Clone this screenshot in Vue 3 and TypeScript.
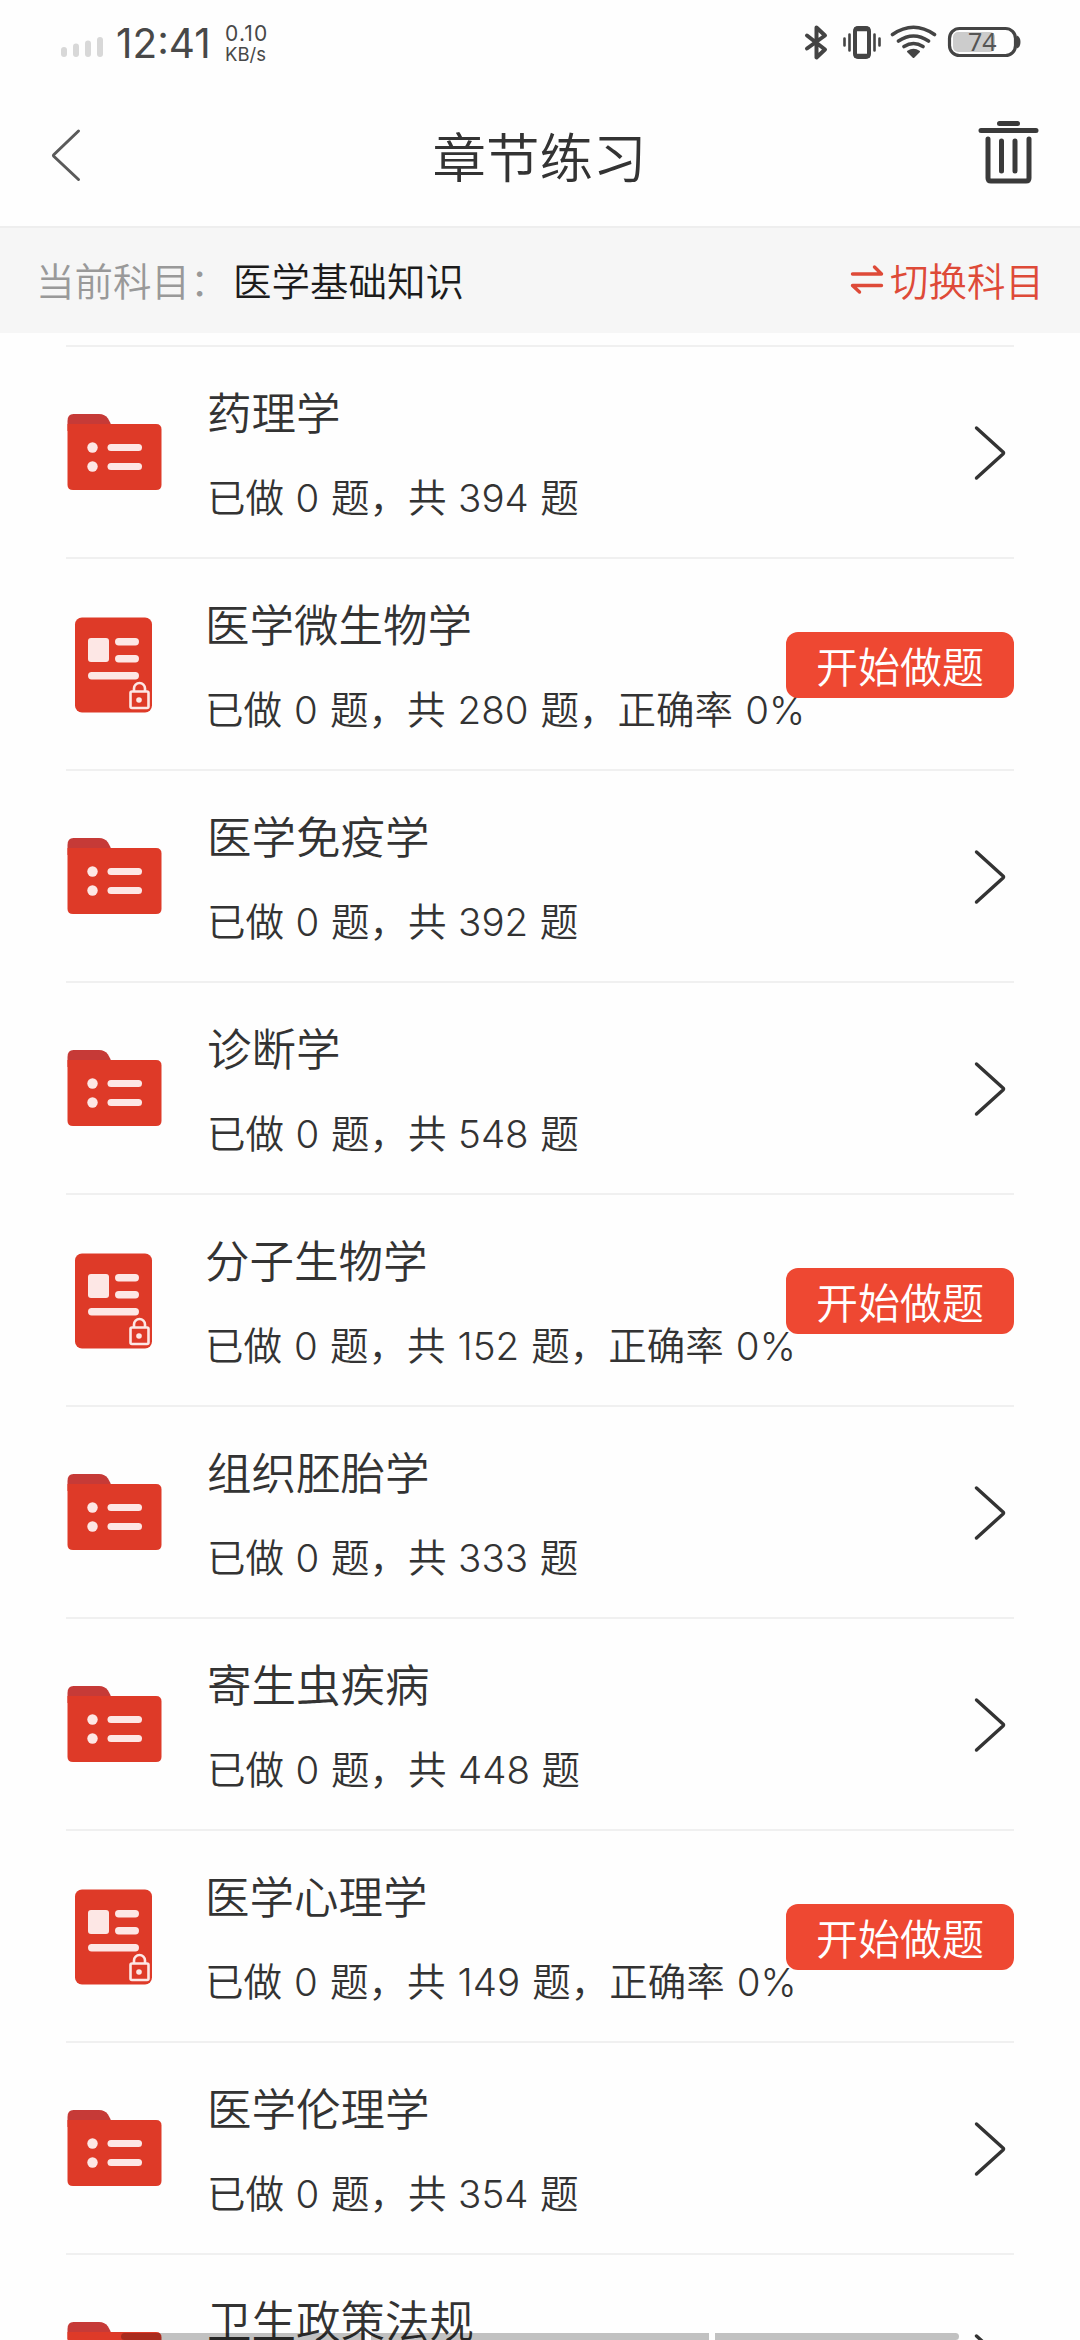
<script setup lang="ts">
interface Chapter {
  name: string
  total?: number
  locked?: boolean
}

const chapters: Chapter[] = [
  { name: '药理学', total: 394 },
  { name: '医学微生物学', total: 280, locked: true },
  { name: '医学免疫学', total: 392 },
  { name: '诊断学', total: 548 },
  { name: '分子生物学', total: 152, locked: true },
  { name: '组织胚胎学', total: 333 },
  { name: '寄生虫疾病', total: 448 },
  { name: '医学心理学', total: 149, locked: true },
  { name: '医学伦理学', total: 354 },
  { name: '卫生政策法规' },
]
</script>

<template>
  <div class="screen">
    <div class="status">
      <svg class="signal" width="44" height="22" viewBox="0 0 44 22" fill="#d8d8d8">
        <rect x="0" y="11" width="6" height="10" rx="3" />
        <rect x="12" y="7.5" width="6" height="13.5" rx="3" />
        <rect x="24" y="4.5" width="6" height="16.5" rx="3" />
        <rect x="36" y="1" width="6" height="20" rx="3" />
      </svg>
      <span class="clock">12:41</span>
      <span class="speed"><span class="rate">0.10</span><span>KB/s</span></span>
      <svg class="indicators" width="220" height="40" viewBox="802 22 220 40" fill="none" stroke="#444" stroke-linecap="round" stroke-linejoin="round">
        <path d="M807 35.500L825 49.500L816.500 57.500V27.500L825 35.500L807 48.500" stroke-width="4" />
        <rect x="855" y="28" width="14" height="29" rx="3" stroke-width="4" />
        <path d="M856 29h12M856 56h12" stroke-width="4.500" />
        <path d="M844.500 38.500v7M849.500 34.500v16M874.500 34.500v16M879.500 38.500v7" stroke-width="2.600" />
        <path d="M892.500 34.500Q913.500 20 934.500 34.500M898.500 41Q913.500 31 928.500 41M904 46.500Q913.500 40.500 923 46.500" stroke-width="3.600" />
        <path d="M913.500 57L908 51.500Q913.500 48 919 51.500Z" fill="#444" stroke-width="2" />
        <rect x="953" y="32" width="42" height="20" rx="5" fill="#ccc" stroke="none" />
        <rect x="949.500" y="28.500" width="66" height="27" rx="10" stroke-width="3.200" />
        <path d="M1017 35.500Q1020.500 37 1020.500 42T1017 48.500Z" fill="#444" stroke="none" />
        <text x="968" y="51" class="level">74</text>
      </svg>
    </div>

    <header class="navbar">
      <svg class="back" width="34" height="58" viewBox="0 0 34 58" fill="none" stroke="#5a5a5a" stroke-width="3" stroke-linecap="round" stroke-linejoin="round">
        <path d="M28.500 5L4 28.500Q3 29.500 4 30.500L28.500 53.500" />
      </svg>
      <h1>章节练习</h1>
      <svg class="trash" width="62" height="66" viewBox="0 0 62 66" fill="none" stroke="#3a3a3a" stroke-width="5" stroke-linecap="round" stroke-linejoin="round">
        <path d="M21.500 3.500h18M3 10.500h55" />
        <path d="M10 19v39q0 3 3 3h35q3 0 3-3V19M23.500 21v30M37 21v30" />
      </svg>
    </header>

    <section class="subject">
      <span class="label">当前科目：</span>
      <span class="current">医学基础知识</span>
      <button class="switch">
        <svg width="34" height="32" viewBox="0 0 34 32" fill="none" stroke="#de4a38" stroke-width="3.400" stroke-linecap="round" stroke-linejoin="round">
          <path d="M2.500 11H31.500L24.500 4M31.500 22.500H2.500L9.500 29" />
        </svg>
        <span>切换科目</span>
      </button>
    </section>

    <ul class="list">
      <li v-for="item in chapters" :key="item.name" class="row" :class="{ locked: item.locked }">
        <svg v-if="item.locked" class="icon" width="96" height="98" viewBox="0 0 96 98">
          <rect x="9" y="1.500" width="77" height="95" rx="7" fill="#de3a28" />
          <g fill="#fde7e5">
            <rect x="22" y="22" width="21" height="24" rx="3" />
            <rect x="49" y="22" width="24" height="7.500" rx="3.700" />
            <rect x="49" y="39" width="24" height="7.500" rx="3.700" />
            <rect x="22" y="56" width="51" height="7.500" rx="3.700" />
            <circle cx="73" cy="84" r="2.800" />
          </g>
          <path d="M68 75v-2.500a5.500 5.500 0 0 1 11 0V75M66 75.500h15q1.500 0 1.500 1.500v13.500q0 1.500-1.500 1.500h-15q-1.500 0-1.500-1.500V77q0-1.500 1.500-1.500z" fill="none" stroke="#fde7e5" stroke-width="2.600" />
        </svg>
        <svg v-else class="icon" width="96" height="98" viewBox="0 0 96 98">
          <path d="M1.500 24V14q0-7 6-7H33q6 0 9 4.500T45.500 20V24z" fill="#c63a37" />
          <path d="M1.500 17H90q5.500 0 5.500 5.500V78q0 5-5.500 5H7q-5.500 0-5.500-5z" fill="#de3a28" />
          <g fill="#fde7e5">
            <circle cx="26.500" cy="40.500" r="5.200" />
            <circle cx="26.500" cy="59.500" r="5.200" />
            <rect x="41.500" y="37" width="34.500" height="7" rx="3.500" />
            <rect x="41.500" y="56" width="34.500" height="7" rx="3.500" />
          </g>
        </svg>
        <div class="info">
          <div class="name">{{ item.name }}</div>
          <div v-if="item.total" class="progress">已做 <i>0</i> 题，共 <i>{{ item.total }}</i> 题<template v-if="item.locked">，正确率 <i>0%</i></template></div>
        </div>
        <button v-if="item.locked" class="start">开始做题</button>
        <svg v-else class="chevron" width="34" height="58" viewBox="0 0 34 58" fill="none" stroke="#333" stroke-width="3.400" stroke-linecap="round" stroke-linejoin="round">
          <path d="M3.500 4L30 28Q31 29 30 30L3.500 54" />
        </svg>
      </li>
    </ul>

    <div class="gesture"><span></span><span class="middle"></span><span></span></div>
  </div>
</template>

<style>
body {
  margin: 0;
  background: #fefefe;
}
</style>

<style scoped>
.screen {
  position: relative;
  width: 1080px;
  height: 2340px;
  overflow: hidden;
  background: #fefefe;
  color: #333;
  font-family: "Noto Sans CJK SC", sans-serif;
  font-weight: 350;
}
button {
  border: 0;
  padding: 0;
  background: none;
  font: inherit;
}
.status {
  display: flex;
  height: 86px;
  padding: 0 58px 0 61px;
  box-sizing: border-box;
  color: #484848;
  font-family: Inter, sans-serif;
}
.signal {
  margin-top: 36px;
}
.clock {
  margin: 20px 0 0 11px;
  width: 98px;
  font-size: 40.500px;
  line-height: 48px;
  font-weight: 400;
}
.speed {
  display: flex;
  flex-direction: column;
  margin: 23px 0 0 11px;
  font-size: 18.500px;
  line-height: 20px;
  font-weight: 400;
}
.rate {
  font-size: 21px;
  line-height: 21px;
  letter-spacing: 1.200px;
}
.indicators {
  margin: 22px 0 0 auto;
}
.level {
  fill: #555;
  stroke: none;
  font-family: "Noto Sans", sans-serif;
  font-size: 25px;
  font-weight: 400;
}
.navbar {
  display: flex;
  align-items: center;
  justify-content: space-between;
  height: 142px;
  padding: 0 40px 4px 50px;
  box-sizing: border-box;
  border-bottom: 2px solid #eee;
}
.back {
  margin: 2px 17px 0 0;
}
h1 {
  margin: 2px 0 0;
  font-size: 53.500px;
  line-height: 80px;
  font-weight: 350;
}
.trash {
  margin-bottom: 2px;
}
.subject {
  display: flex;
  align-items: center;
  height: 105px;
  padding: 0 36px 3px 36px;
  box-sizing: border-box;
  background: #f6f6f6;
  font-size: 38.500px;
  line-height: 58px;
}
.label {
  width: 197px;
  color: #999;
  white-space: nowrap;
}
.current {
  color: #1c1c1c;
}
.switch {
  display: flex;
  align-items: center;
  gap: 6px;
  margin-left: auto;
  color: #de4a38;
}
.list {
  margin: 12px 66px 0;
  padding: 0;
  list-style: none;
}
.row {
  position: relative;
  display: flex;
  height: 212px;
  box-sizing: border-box;
  border-top: 2px solid #f0f0f0;
}
.icon {
  flex: none;
  margin-top: 60px;
}
.locked .icon {
  margin-top: 57px;
}
.info {
  margin: 31px 0 0 45px;
  white-space: nowrap;
}
.locked .info {
  margin-left: 43px;
}
.name {
  font-size: 44.500px;
  line-height: 66px;
}
.progress {
  margin-top: 22px;
  font-size: 38.500px;
  line-height: 58px;
  word-spacing: 3px;
}
.locked .progress {
  word-spacing: 3.500px;
}
.progress i {
  font-style: normal;
  font-weight: 300;
  font-family: Inter, sans-serif;
}
.start {
  position: absolute;
  top: 73px;
  right: 0;
  width: 228px;
  height: 66px;
  border-radius: 12px;
  background: #ee4832;
  color: #fff;
  font-size: 42px;
  line-height: 66px;
}
.chevron {
  margin: 77px 7px 0 auto;
}
.gesture {
  position: absolute;
  left: 121px;
  bottom: 0;
  display: flex;
  gap: 6px;
}
.gesture span {
  width: 244px;
  height: 7px;
  background: rgba(0, 0, 0, 0.24);
  border-radius: 4px 0 0 4px;
}
.gesture span:last-child {
  border-radius: 0 4px 4px 0;
}
.gesture .middle {
  width: 338px;
  border-radius: 0;
}
</style>
